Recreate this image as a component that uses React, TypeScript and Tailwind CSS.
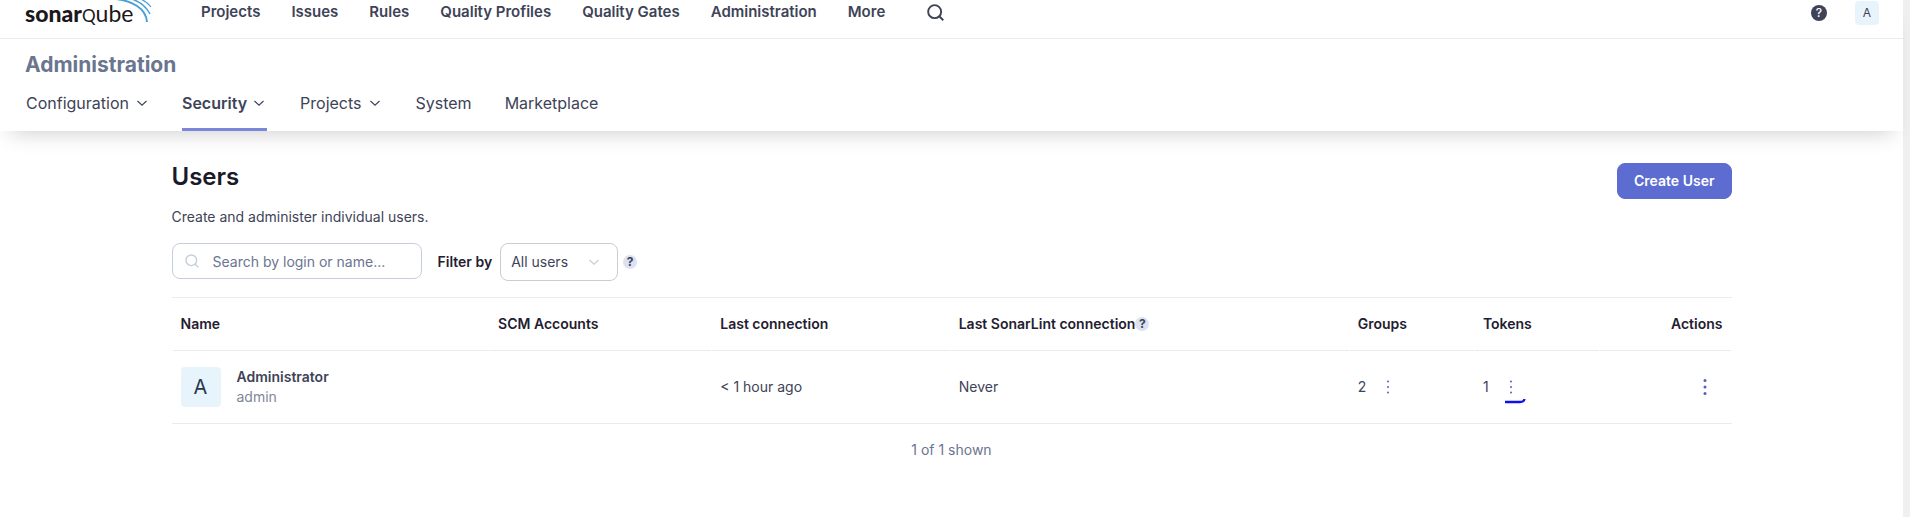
import React from 'react';

const mainNav = ['Projects', 'Issues', 'Rules', 'Quality Profiles', 'Quality Gates', 'Administration', 'More'];

const adminNav = [
  { label: 'Configuration', menu: true, active: false },
  { label: 'Security', menu: true, active: true },
  { label: 'Projects', menu: true, active: false },
  { label: 'System', menu: false, active: false },
  { label: 'Marketplace', menu: false, active: false },
];

function Chevron({ className = '' }: { className?: string }) {
  return (
    <svg className={className} width="16" height="16" viewBox="0 0 16 16" fill="none" stroke="currentColor" strokeWidth="1.2" aria-hidden="true">
      <path d="M3.5 6 8 10.2 12.5 6" />
    </svg>
  );
}

function Glass({ size, stroke }: { size: number; stroke: number }) {
  return (
    <svg width={size} height={size} viewBox="0 0 16 16" fill="none" stroke="currentColor" strokeWidth={stroke} aria-hidden="true">
      <circle cx="7.2" cy="7.2" r="6.1" />
      <path d="m11.5 11.5 3.8 3.8" />
    </svg>
  );
}

function Dots({ r, gap }: { r: number; gap: number }) {
  return (
    <svg width="16" height="20" viewBox="0 0 16 20" fill="currentColor" aria-hidden="true">
      <circle cx="8" cy={10 - gap} r={r} />
      <circle cx="8" cy="10" r={r} />
      <circle cx="8" cy={10 + gap} r={r} />
    </svg>
  );
}

function Help() {
  return (
    <button
      type="button"
      aria-label="Help"
      className="flex size-3.5 items-center justify-center rounded-full bg-[#dde2f3] text-xs leading-none font-bold text-[#3e4357]"
    >
      ?
    </button>
  );
}

function Logo() {
  return (
    <a href="#home" className="relative flex h-[30px] w-32 items-baseline font-['Lato',sans-serif] leading-[26px] text-[#1b171b]">
      <span className="text-[23px] font-black">sonar</span>
      <span className="text-[17px]">Q</span>
      <span className="text-[23px]">ube</span>
      <svg className="absolute top-0 left-[91px]" width="36" height="23" viewBox="0 0 36 23" fill="none" stroke="#4b9fd5" aria-hidden="true">
        <path d="M0-1C16 1 30 8 31 22" strokeWidth="2" />
        <path d="M13-2C23 1 30 6 34 14" strokeWidth="1.5" />
        <path d="M22-2C28 0 32 3 35 7" strokeWidth="1.2" />
      </svg>
    </a>
  );
}

const th = 'h-[53px] border-b border-[#ebebeb] px-2 py-0 text-left font-semibold text-[#1f2030]';
const td = 'h-[72px] px-2 py-0';

export default function App() {
  return (
    <div className="flex min-h-screen bg-white font-['Inter',sans-serif] text-sm text-[#3e4357]">
      <div className="flex min-w-0 grow flex-col">
        <header className="relative bg-white shadow-[0_12px_20px_-10px_rgba(0,0,0,0.19)]">
          <div className="flex h-[39px] items-start border-b border-[#ebebeb] pl-[25px]">
            <Logo />
            <nav className="ml-12 flex gap-[31px] text-[15px]">
              {mainNav.map((item) => (
                <a key={item} href="#nav" className="leading-6 font-semibold whitespace-nowrap">
                  {item}
                </a>
              ))}
            </nav>
            <button type="button" aria-label="Search" className="mt-1 ml-[42px]">
              <Glass size={17} stroke={1.8} />
            </button>
            <div className="mr-6 ml-auto flex items-center gap-7 pt-px">
              <button
                type="button"
                aria-label="Help"
                className="flex size-4 items-center justify-center rounded-full bg-[#3e4357] text-xs leading-none font-medium text-white"
              >
                ?
              </button>
              <button type="button" className="size-6 rounded bg-[#e8f4fb] text-xs">
                A
              </button>
            </div>
          </div>
          <div className="pl-[25px]">
            <h2 className="pt-3 text-[21px] leading-7 font-bold text-[#6a7590]">Administration</h2>
            <nav className="flex h-[52px] gap-8 text-base">
              {adminNav.map((item) => (
                <a
                  key={item.label}
                  href="#admin"
                  className={
                    item.active
                      ? 'flex items-center gap-1 border-b-3 border-[#7b87d9] pb-0.5 font-semibold'
                      : 'flex items-center gap-[5px] border-b-3 border-transparent pb-0.5 pl-px'
                  }
                >
                  {item.label}
                  {item.menu && <Chevron />}
                </a>
              ))}
            </nav>
          </div>
        </header>

        <main className="mx-auto w-full max-w-[1560px] pt-8">
          <div className="flex items-start justify-between">
            <h1 className="text-2xl leading-7 font-semibold text-[#1a1a2a]">Users</h1>
            <button type="button" className="h-9 rounded-lg border border-[#5d6cd0] bg-[#5d6cd0] px-4 font-semibold text-white">
              Create User
            </button>
          </div>
          <p className="mt-2 leading-5">Create and administer individual users.</p>

          <div className="mt-4 flex items-start">
            <label className="flex h-9 w-[250px] items-center gap-3.5 rounded-lg border border-[#c5cddf] px-3">
              <span className="text-[#c5cddf]">
                <Glass size={14} stroke={1.6} />
              </span>
              <input
                type="text"
                aria-label="Search by login or name"
                placeholder="Search by login or name..."
                className="min-w-0 grow bg-transparent pt-0.5 outline-none placeholder:text-[#6a7590]"
              />
            </label>
            <label htmlFor="filter" className="ml-4 leading-[38px] font-semibold text-[#1f2030]">
              Filter by
            </label>
            <div className="relative ml-2">
              <select id="filter" className="h-[38px] w-[118px] appearance-none rounded-lg border border-[#cccccc] bg-white pl-2.5">
                <option>All users</option>
              </select>
              <Chevron className="pointer-events-none absolute top-[11px] right-4 text-[#cccccc]" />
            </div>
            <div className="ml-[5px] flex h-[38px] items-center">
              <Help />
            </div>
          </div>

          <table className="mt-4 w-full table-fixed border-separate border-spacing-x-px border-spacing-y-0 border-y border-[#ebebeb]">
            <thead>
              <tr>
                <th className={`${th} w-[20.4%]`}>Name</th>
                <th className={`${th} w-[14.25%]`}>SCM Accounts</th>
                <th className={`${th} w-[15.3%]`}>Last connection</th>
                <th className={`${th} w-[25.65%]`}>
                  <span className="flex items-center">
                    Last SonarLint connection
                    <Help />
                  </span>
                </th>
                <th className={`${th} w-[8%]`}>Groups</th>
                <th className={`${th} w-[8%]`}>Tokens</th>
                <th className={`${th} text-right`}>Actions</th>
              </tr>
            </thead>
            <tbody>
              <tr>
                <td className={td}>
                  <div className="flex items-center gap-4">
                    <span className="flex size-10 items-center justify-center rounded bg-[#e8f4fb] text-xl text-[#29384c]">A</span>
                    <div className="leading-5">
                      <div className="font-semibold">Administrator</div>
                      <div className="text-[#808799]">admin</div>
                    </div>
                  </div>
                </td>
                <td className={td} />
                <td className={td}>&lt; 1 hour ago</td>
                <td className={td}>Never</td>
                <td className={td}>
                  <div className="flex items-center gap-3.5">
                    2
                    <button type="button" aria-label="Edit groups" className="text-[#5260be]">
                      <Dots r={1} gap={5.5} />
                    </button>
                  </div>
                </td>
                <td className={td}>
                  <div className="flex items-center gap-3.5">
                    1
                    <button type="button" aria-label="Edit tokens" className="relative text-[#5260be]">
                      <Dots r={1} gap={5.5} />
                      <svg className="absolute top-5 left-0.5" width="22" height="8" viewBox="0 0 22 8" fill="none" stroke="#1010ee" strokeWidth="2.4" aria-hidden="true">
                        <path d="M0 5H15C18 5 19.2 4.4 19.4 2" />
                      </svg>
                    </button>
                  </div>
                </td>
                <td className={td}>
                  <div className="flex justify-end pr-2.5">
                    <button type="button" aria-label="Manage user" className="text-[#5260be]">
                      <Dots r={1.5} gap={6.6} />
                    </button>
                  </div>
                </td>
              </tr>
            </tbody>
          </table>
          <p className="mt-4 text-center leading-5 text-[#6a7590]">1 of 1 shown</p>
        </main>
      </div>
      <div className="w-[7px] shrink-0 bg-[#f0f0f0]" />
    </div>
  );
}
